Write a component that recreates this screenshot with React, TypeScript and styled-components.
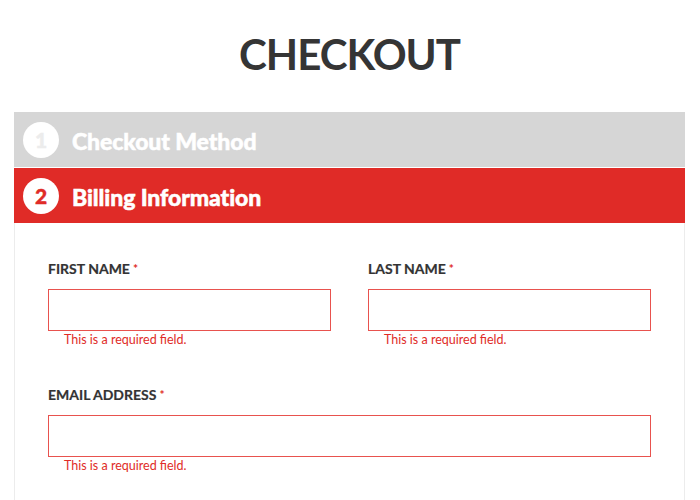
import React from 'react';
import styled, { createGlobalStyle } from 'styled-components';

const GlobalStyle = createGlobalStyle`
  html, body {
    margin: 0;
    padding: 0;
    background: #ffffff;
  }
  body {
    font-family: Lato, "Open Sans", "Liberation Sans", sans-serif;
    color: #333333;
    overflow: hidden;
  }
  * {
    box-sizing: border-box;
  }
`;

const Page = styled.div`
  padding: 0 15px 0 14px;
`;

const Title = styled.h1`
  margin: 29px 0 33px;
  font-size: 42px;
  line-height: 50px;
  font-weight: 700;
  letter-spacing: -1px;
  text-align: center;
  color: #353535;
`;

const Steps = styled.div`
  display: flex;
  flex-direction: column;
  gap: 1px;
`;

const StepHeader = styled.div<{ active?: boolean }>`
  display: flex;
  align-items: center;
  gap: 13px;
  height: 55px;
  padding-left: 9px;
  background-color: ${props => (props.active ? '#e02b27' : '#d6d6d6')};
  color: #ffffff;
`;

const StepNumber = styled.span<{ active?: boolean }>`
  display: flex;
  align-items: center;
  justify-content: center;
  width: 36px;
  height: 36px;
  border-radius: 50%;
  background-color: #ffffff;
  color: ${props => (props.active ? '#e02b27' : '#ececec')};
  font-size: 21px;
  font-weight: 900;
  -webkit-text-stroke: 0.4px currentColor;
`;

const StepTitle = styled.span`
  padding-top: 3px;
  font-size: 23px;
  font-weight: 900;
  line-height: 1;
  letter-spacing: -0.1px;
  -webkit-text-stroke: 0.5px #ffffff;
`;

const StepBody = styled.div`
  border: 1px solid #ececec;
  border-top: none;
  padding: 37px 33px 20px;
`;

const Row = styled.div<{ columns: number }>`
  display: grid;
  grid-template-columns: repeat(${props => props.columns}, 1fr);
  column-gap: 37px;
  margin-bottom: 38px;
`;

const Field = styled.div`
  display: flex;
  flex-direction: column;
`;

const Label = styled.label`
  font-size: 14px;
  line-height: 18px;
  font-weight: 700;
  color: #333333;
  margin-bottom: 11px;
  -webkit-text-stroke: 0.2px #333333;
`;

const Required = styled.span`
  color: #e02b27;
  font-size: 12px;
  margin-left: 3px;
  vertical-align: top;
  -webkit-text-stroke: 0;
`;

const Input = styled.input`
  height: 42px;
  width: 100%;
  border: 1px solid #e8524e;
  background: #ffffff;
  padding: 0 10px;
  font-family: inherit;
  font-size: 14px;
  outline: none;
`;

const ErrorText = styled.div`
  margin-top: 1px;
  padding-left: 16px;
  font-size: 12.5px;
  line-height: 16px;
  color: #e02b27;
`;

type FieldProps = { label: string; id: string };

const RequiredField: React.FC<FieldProps> = ({ label, id }) => (
  <Field>
    <Label htmlFor={id}>
      {label}
      <Required>*</Required>
    </Label>
    <Input id={id} type="text" />
    <ErrorText>This is a required field.</ErrorText>
  </Field>
);

const App: React.FC = () => {
  return (
    <>
      <GlobalStyle />
      <Page>
        <Title>CHECKOUT</Title>
        <Steps>
          <StepHeader>
            <StepNumber>1</StepNumber>
            <StepTitle>Checkout Method</StepTitle>
          </StepHeader>
          <div>
            <StepHeader active>
              <StepNumber active>2</StepNumber>
              <StepTitle>Billing Information</StepTitle>
            </StepHeader>
            <StepBody>
              <Row columns={2}>
                <RequiredField id="firstname" label="FIRST NAME" />
                <RequiredField id="lastname" label="LAST NAME" />
              </Row>
              <Row columns={1}>
                <RequiredField id="email" label="EMAIL ADDRESS" />
              </Row>
            </StepBody>
          </div>
        </Steps>
      </Page>
    </>
  );
};

export default App;
